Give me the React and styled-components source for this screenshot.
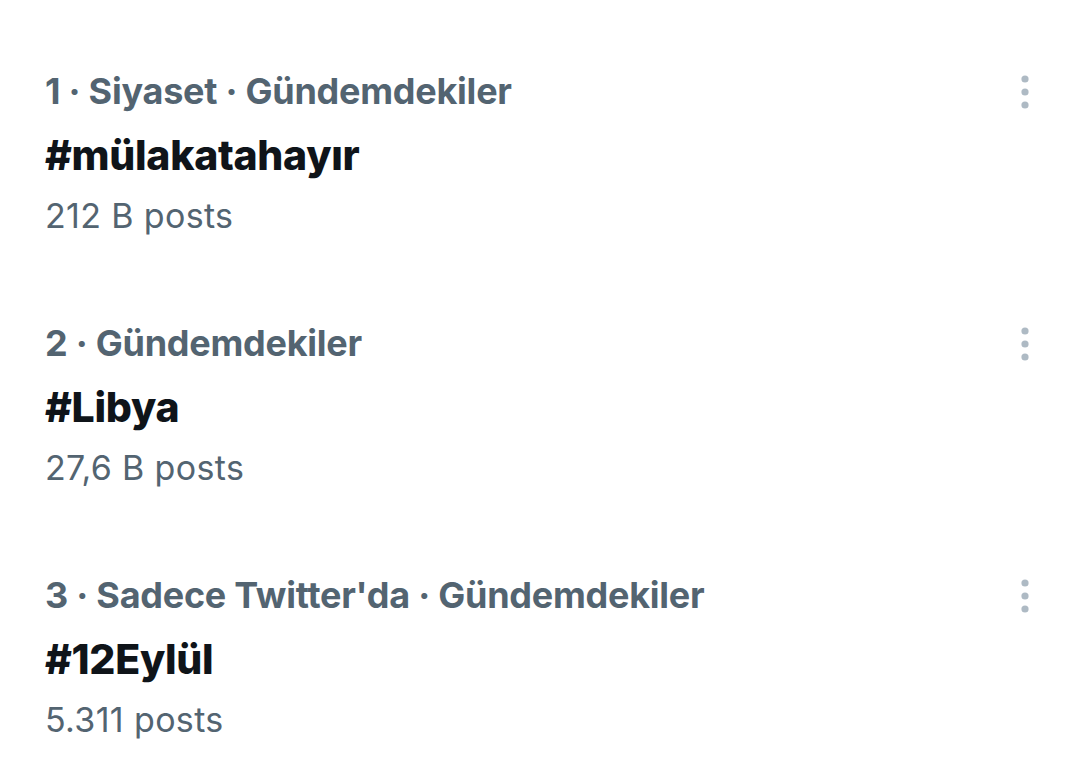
import React from 'react'
import styled, { createGlobalStyle } from 'styled-components'

const GlobalStyle = createGlobalStyle`
  html, body {
    margin: 0;
    padding: 0;
    background: #ffffff;
  }
  body {
    font-family: Inter, Roboto, "Noto Sans", sans-serif;
    -webkit-font-smoothing: antialiased;
  }
`

const List = styled.main`
  display: flex;
  flex-direction: column;
  gap: 82px;
  padding: 68px 0 0 0;
  width: 1068px;
`

const Trend = styled.section`
  display: grid;
  grid-template-columns: 1fr 60px;
  padding: 0 13px 0 45px;
`

const Info = styled.div`
  display: flex;
  flex-direction: column;
`

const Meta = styled.div`
  color: #536471;
  font-size: 36px;
  font-weight: 700;
  line-height: 46px;
  letter-spacing: -0.25px;
`

const Tag = styled.div`
  color: #0f1419;
  font-size: 41px;
  font-weight: 800;
  line-height: 48px;
  margin-top: 17px;
  letter-spacing: -0.3px;
`

const Count = styled.div`
  color: #536471;
  font-size: 34px;
  font-weight: 400;
  line-height: 44px;
  margin-top: 15px;
  letter-spacing: 0.35px;
`

const MoreButton = styled.button`
  align-self: start;
  justify-self: center;
  margin-top: 4px;
  width: 40px;
  height: 40px;
  padding: 0;
  border: none;
  background: transparent;
  display: flex;
  align-items: center;
  justify-content: center;
`

const trends = [
  { id: 1, meta: '1 · Siyaset · Gündemdekiler', tag: '#mülakatahayır', count: '212 B posts' },
  { id: 2, meta: '2 · Gündemdekiler', tag: '#Libya', count: '27,6 B posts' },
  { id: 3, meta: "3 · Sadece Twitter'da · Gündemdekiler", tag: '#12Eylül', count: '5.311 posts' }
]

const MoreIcon = () => (
  <svg width="10" height="34" viewBox="0 0 10 34" fill="#aebac4">
    <circle cx="5" cy="4" r="3.6" />
    <circle cx="5" cy="17" r="3.6" />
    <circle cx="5" cy="30" r="3.6" />
  </svg>
)

export default function App() {
  return (
    <>
      <GlobalStyle />
      <List>
        {trends.map(t => (
          <Trend key={t.id}>
            <Info>
              <Meta>{t.meta}</Meta>
              <Tag>{t.tag}</Tag>
              <Count>{t.count}</Count>
            </Info>
            <MoreButton aria-label="More">
              <MoreIcon />
            </MoreButton>
          </Trend>
        ))}
      </List>
    </>
  )
}
